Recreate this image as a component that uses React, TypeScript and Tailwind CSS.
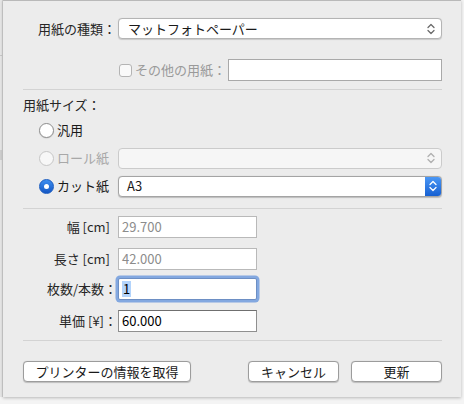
const font = {
  fontFamily: '"Noto Sans CJK JP", "Noto Sans", sans-serif',
};

function Chevrons({ color = "#6b6b6b" }: { color?: string }) {
  return (
    <svg width="8" height="12" viewBox="0 0 8 12" fill="none">
      <path d="M1 4.5 L4 1.5 L7 4.5" stroke={color} strokeWidth="1.3" strokeLinecap="round" strokeLinejoin="round" />
      <path d="M1 7.5 L4 10.5 L7 7.5" stroke={color} strokeWidth="1.3" strokeLinecap="round" strokeLinejoin="round" />
    </svg>
  );
}

function Radio({ state }: { state: "off" | "on" | "disabled" }) {
  if (state === "on") {
    return (
      <span className="w-[15px] h-[15px] rounded-full bg-gradient-to-b from-[#3d8ef0] to-[#1557c4] border border-[#1a5cc0] flex items-center justify-center">
        <span className="w-[5px] h-[5px] rounded-full bg-white" />
      </span>
    );
  }
  return (
    <span
      className={
        state === "disabled"
          ? "w-[15px] h-[15px] rounded-full bg-[#f7f7f7] border border-[#c6c6c6]"
          : "w-[15px] h-[15px] rounded-full bg-white border border-[#8e8e8e] shadow-[0_0.5px_1px_rgba(0,0,0,0.15)]"
      }
    />
  );
}

function Field({
  label,
  value,
  pad,
  tone,
}: {
  label: string;
  value: string;
  pad?: boolean;
  tone: "disabled" | "focus" | "normal";
}) {
  return (
    <div className="flex items-center h-[22px]">
      <div className={`w-[94px] text-right text-[13px] text-[#262626] ${pad ? "pr-[7px]" : ""}`}>{label}</div>
      <div
        className={
          tone === "focus"
            ? "ml-[1px] w-[139px] h-[22px] bg-white border border-[#6d8fc4] rounded-[2px] shadow-[0_0_0_2.5px_rgba(96,146,220,0.75)] flex items-center px-[3px]"
            : tone === "disabled"
              ? "ml-[1px] w-[139px] h-[22px] bg-white border border-[#b9b9b9] flex items-center px-[3px]"
              : "ml-[1px] w-[139px] h-[22px] bg-white border border-[#8f8f8f] border-t-[#6f6f6f] flex items-center px-[3px]"
        }
      >
        {tone === "focus" ? (
          <span className="bg-[#b3d4fc] text-[13px] leading-[16px] text-black px-[1px]">{value}</span>
        ) : (
          <span className={`text-[13px] ${tone === "disabled" ? "text-[#8c8c8c]" : "text-black"}`}>{value}</span>
        )}
      </div>
    </div>
  );
}

function Button({ children, w }: { children: string; w: string }) {
  return (
    <button
      className={`${w} h-[21px] bg-white border border-[#9c9c9c] rounded-[4px] shadow-[0_0.5px_1px_rgba(0,0,0,0.2)] text-[13px] text-[#1a1a1a] leading-none flex items-center justify-center`}
    >
      {children}
    </button>
  );
}

export default function App() {
  return (
    <div className="w-[464px] h-[404px] bg-[#f4f4f4] flex overflow-hidden" style={font}>
      <div className="w-[3px] h-[397px] bg-[#e6e6e6] border-r border-[#d2d2d2] flex flex-col">
        <div className="h-[55px]" />
        <div className="h-px bg-[#c9c9c9]" />
        <div className="h-[94px]" />
        <div className="h-[10px] bg-[#cfcfcf]" />
      </div>
      <div className="w-[458px] h-[397px] bg-[#ececec] border-t border-[#b9b9b9] shadow-[0_1px_3px_rgba(0,0,0,0.25)] pl-[20px] pr-[19px] flex flex-col">
        {/* paper type */}
        <div className="flex items-center mt-[17px] h-[21px]">
          <div className="w-[93px] text-right text-[13px] text-[#262626]">用紙の種類：</div>
          <div className="ml-[2px] flex-1 h-[21px] bg-white border border-[#b4b4b4] rounded-[4px] shadow-[0_0.5px_1px_rgba(0,0,0,0.15)] flex items-center justify-between pl-[9px] pr-[6px]">
            <span className="text-[13px] text-[#1a1a1a]">マットフォトペーパー</span>
            <Chevrons />
          </div>
        </div>

        {/* other paper */}
        <div className="flex items-center mt-[20px] h-[22px]">
          <div className="w-[96px]" />
          <span className="w-[13px] h-[13px] rounded-[3px] border border-[#b4b4b4] bg-[#f9f9f9]" />
          <span className="ml-[3px] text-[13px] text-[#9a9a9a] w-[93px]">その他の用紙：</span>
          <div className="flex-1 h-[22px] bg-white border border-[#a9a9a9]" />
        </div>

        <div className="mt-[8px] h-px bg-[#d3d3d3]" />

        <div className="mt-[6px] text-[13px] text-[#262626] h-[18px] leading-[18px]">用紙サイズ：</div>

        {/* radios */}
        <div className="flex items-center mt-[8px] h-[16px] pl-[16px]">
          <Radio state="off" />
          <span className="ml-[3px] text-[13px] text-[#1a1a1a]">汎用</span>
        </div>

        <div className="flex items-center mt-[9px] h-[22px] pl-[16px]">
          <Radio state="disabled" />
          <span className="ml-[3px] text-[13px] text-[#a8a8a8] w-[61px]">ロール紙</span>
          <div className="flex-1 h-[21px] bg-[#f6f6f6] border border-[#cbcbcb] rounded-[4px] flex items-center justify-end pr-[6px]">
            <Chevrons color="#b0b0b0" />
          </div>
        </div>

        <div className="flex items-center mt-[6px] h-[22px] pl-[16px]">
          <Radio state="on" />
          <span className="ml-[3px] text-[13px] text-[#1a1a1a] w-[61px]">カット紙</span>
          <div className="flex-1 h-[21px] bg-white border border-[#a4a4a4] rounded-[4px] shadow-[0_0.5px_1px_rgba(0,0,0,0.2)] flex items-center overflow-hidden">
            <span className="flex-1 pl-[8px] text-[13px] text-[#1a1a1a]">A3</span>
            <div className="w-[16px] h-full bg-gradient-to-b from-[#4a97f5] to-[#1660d2] flex items-center justify-center">
              <Chevrons color="#ffffff" />
            </div>
          </div>
        </div>

        <div className="mt-[11px] h-px bg-[#d3d3d3]" />

        <div className="mt-[7px] flex flex-col gap-[10px]">
          <Field label="幅 [cm]" value="29.700" pad tone="disabled" />
          <Field label="長さ [cm]" value="42.000" pad tone="disabled" />
          <div className="-mt-[2px]">
            <Field label="枚数/本数：" value="1" tone="focus" />
          </div>
          <Field label="単価 [¥]：" value="60.000" tone="normal" />
        </div>

        <div className="mt-[8px] h-px bg-[#d3d3d3]" />

        <div className="mt-[20px] flex items-center">
          <Button w="w-[168px]">プリンターの情報を取得</Button>
          <div className="flex-1" />
          <Button w="w-[91px]">キャンセル</Button>
          <div className="w-[12px]" />
          <Button w="w-[91px]">更新</Button>
        </div>
      </div>
    </div>
  );
}
